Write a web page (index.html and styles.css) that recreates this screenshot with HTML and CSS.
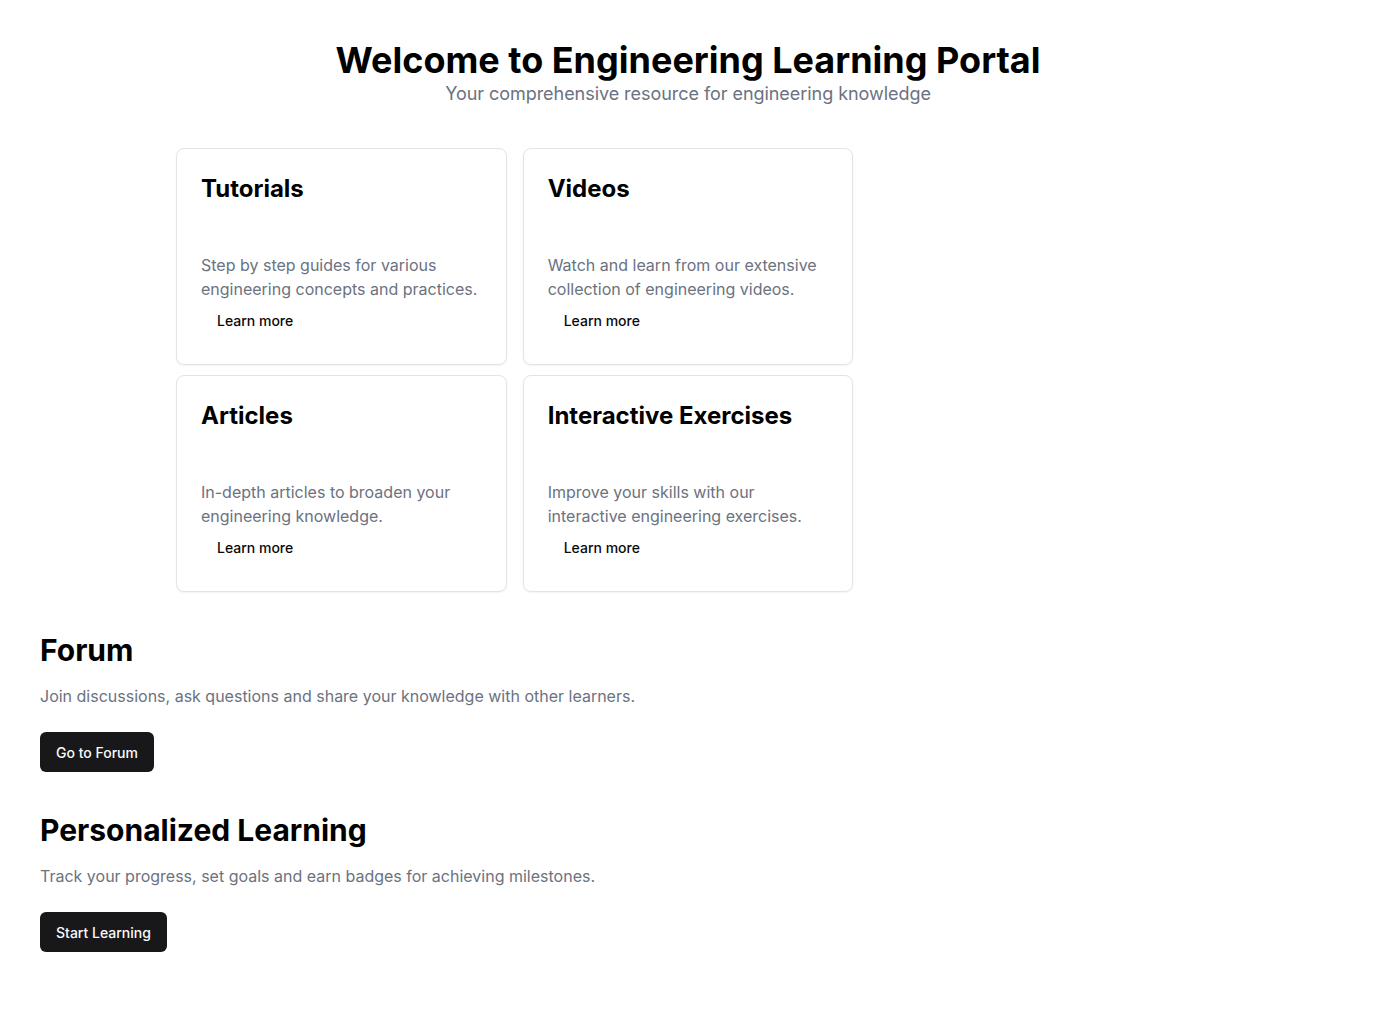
FILE: index.html
```html
<!DOCTYPE html>
<html lang="en">
<head>
<meta charset="utf-8">
<title>Engineering Learning Portal</title>
<link rel="stylesheet" href="styles.css">
</head>
<body>
<main class="page">
  <header class="hero">
    <h1 class="hero-title">Welcome to Engineering Learning Portal</h1>
    <p class="hero-sub">Your comprehensive resource for engineering knowledge</p>
  </header>

  <section class="cards">
    <div class="card card-a">
      <h3 class="card-title">Tutorials</h3>
      <p class="card-desc">Step by step guides for various engineering concepts and practices.</p>
      <button class="link-btn">Learn more</button>
    </div>
    <div class="card card-b">
      <h3 class="card-title">Videos</h3>
      <p class="card-desc">Watch and learn from our extensive collection of engineering videos.</p>
      <button class="link-btn">Learn more</button>
    </div>
    <div class="card card-c">
      <h3 class="card-title">Articles</h3>
      <p class="card-desc">In-depth articles to broaden your engineering knowledge.</p>
      <button class="link-btn">Learn more</button>
    </div>
    <div class="card card-d">
      <h3 class="card-title">Interactive Exercises</h3>
      <p class="card-desc">Improve your skills with our interactive engineering exercises.</p>
      <button class="link-btn">Learn more</button>
    </div>
  </section>

  <section class="block">
    <h2 class="block-title">Forum</h2>
    <p class="block-text">Join discussions, ask questions and share your knowledge with other learners.</p>
    <button class="primary-btn">Go to Forum</button>
  </section>

  <section class="block">
    <h2 class="block-title">Personalized Learning</h2>
    <p class="block-text">Track your progress, set goals and earn badges for achieving milestones.</p>
    <button class="primary-btn">Start Learning</button>
  </section>
</main>
</body>
</html>
```
FILE: styles.css
```css
* { box-sizing: border-box; }
html, body { margin: 0; padding: 0; background: #fff; }
body {
  font-family: Inter, "Liberation Sans", sans-serif;
  color: #09090b;
}
h1, h2, h3, p { margin: 0; }
.page { padding: 40px; }

.hero { text-align: center; }
.hero-title {
  font-size: 36px;
  line-height: 40px;
  font-weight: 700;
  color: #000;
}
.hero-sub {
  font-size: 18px;
  line-height: 28px;
  letter-spacing: -0.05px;
  color: #6b7280;
}

.cards {
  max-width: 1024px;
  margin: 40px auto 0;
  display: grid;
  grid-template-columns: repeat(3, 1fr);
  column-gap: 16px;
  row-gap: 10px;
}
.card-a { grid-column: 1; grid-row: 1; }
.card-b { grid-column: 2; grid-row: 1; }
.card-c { grid-column: 1; grid-row: 2; }
.card-d { grid-column: 2; grid-row: 2; }
.card {
  border: 1px solid #e4e4e7;
  border-radius: 8px;
  background: #fff;
  box-shadow: 0 1px 2px rgba(0,0,0,0.05);
  padding: 24px 24px 24px;
  display: flex;
  flex-direction: column;
  align-items: flex-start;
}
.card-title {
  font-size: 24px;
  line-height: 32px;
  font-weight: 700;
  color: #000;
}
.card-desc {
  margin-top: 48px;
  font-size: 16px;
  line-height: 24px;
  color: #6b7280;
}
.link-btn {
  font-family: inherit;
  border: none;
  background: transparent;
  height: 40px;
  margin-top: -1px;
  padding: 0 16px;
  font-size: 14px;
  font-weight: 500;
  color: #09090b;
  border-radius: 6px;
  cursor: pointer;
}

.block { margin-top: 40px; }
.block-title {
  font-size: 30px;
  line-height: 36px;
  font-weight: 700;
  color: #000;
}
.block-text {
  margin-top: 16px;
  font-size: 16px;
  line-height: 24px;
  color: #6b7280;
}
.primary-btn {
  margin-top: 24px;
  font-family: inherit;
  border: none;
  background: #18181b;
  color: #fafafa;
  height: 40px;
  padding: 0 16px;
  font-size: 14px;
  font-weight: 500;
  border-radius: 6px;
  cursor: pointer;
}
```
